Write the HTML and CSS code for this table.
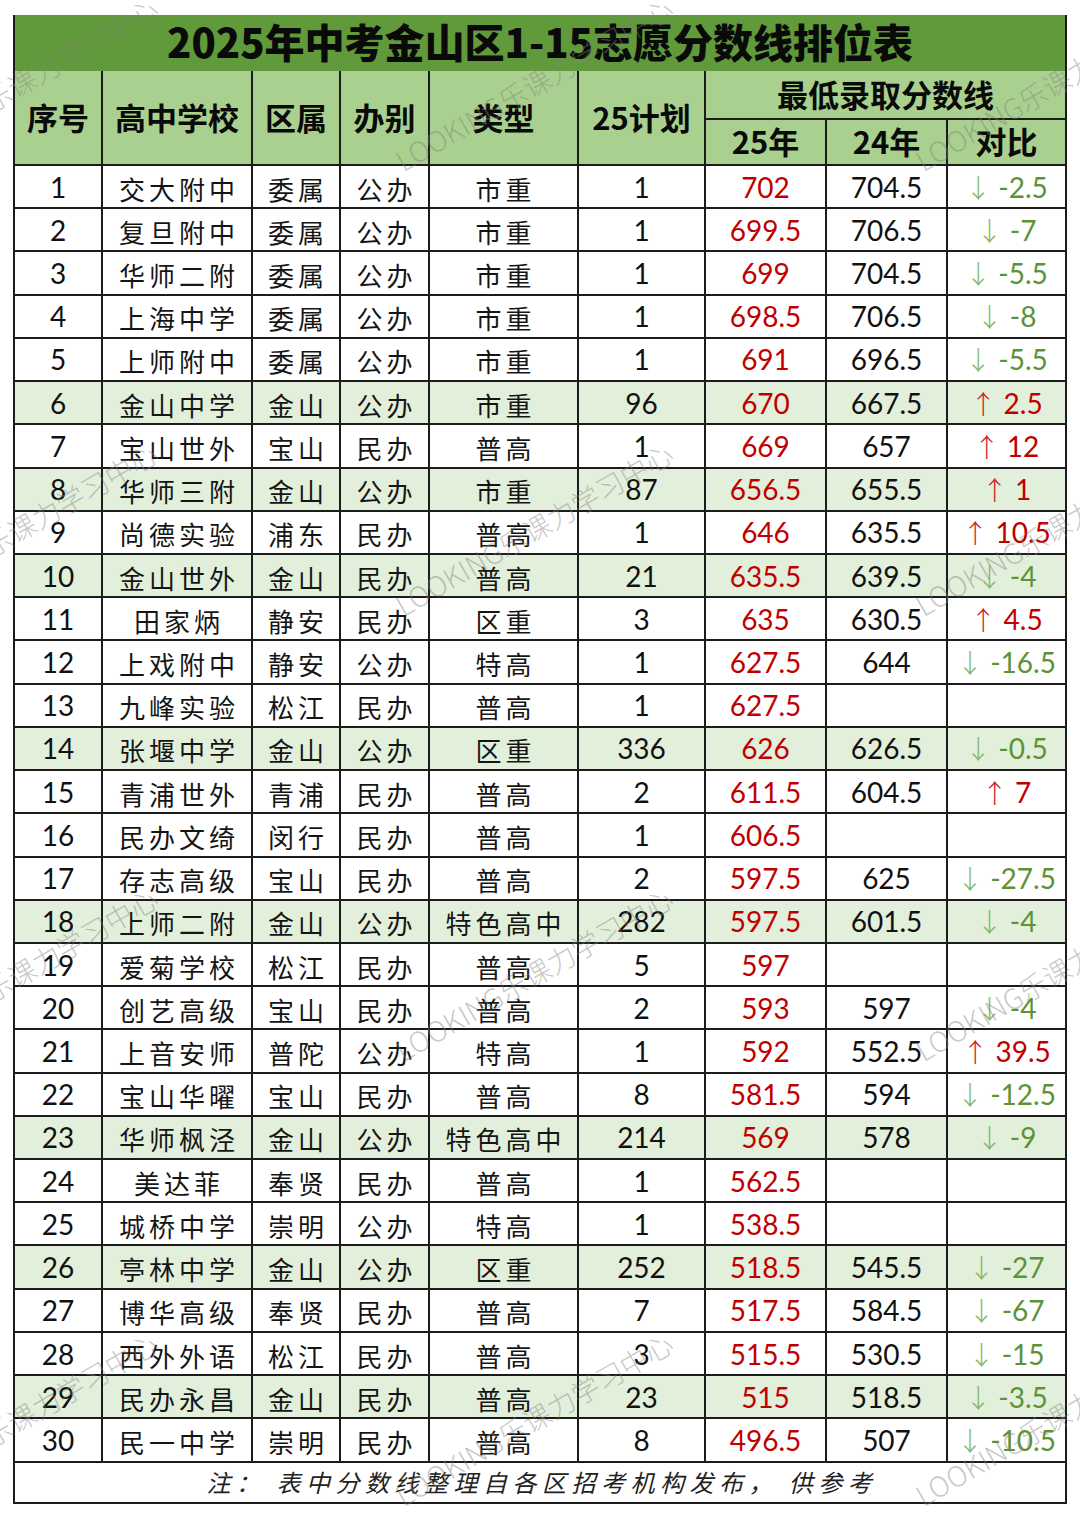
FILE: index.html
```
<!DOCTYPE html>
<html lang="zh-CN">
<head>
<meta charset="utf-8">
<title>2025年中考金山区1-15志愿分数线排位表</title>
<link rel="stylesheet" href="styles.css">
</head>
<body>
<div class="page">
<table class="sheet">
<colgroup>
<col class="w-seq"><col class="w-school"><col class="w-area"><col class="w-type1"><col class="w-type2"><col class="w-plan"><col class="w-s25"><col class="w-s24"><col class="w-diff">
</colgroup>
<thead>
<tr class="title"><th colspan="9">2025年中考金山区1-15志愿分数线排位表</th></tr>
<tr class="hd1">
<th rowspan="2">序号</th><th rowspan="2">高中学校</th><th rowspan="2">区属</th><th rowspan="2">办别</th><th rowspan="2">类型</th><th rowspan="2">25计划</th><th colspan="3">最低录取分数线</th>
</tr>
<tr class="hd2"><th>25年</th><th>24年</th><th>对比</th></tr>
</thead>
<tbody>
<tr><td class="num">1</td><td class="cn">交大附中</td><td class="cn">委属</td><td class="cn">公办</td><td class="cn">市重</td><td class="num">1</td><td class="num red">702</td><td class="num">704.5</td><td class="num down"><span class="ar">↓</span> -2.5</td></tr>
<tr><td class="num">2</td><td class="cn">复旦附中</td><td class="cn">委属</td><td class="cn">公办</td><td class="cn">市重</td><td class="num">1</td><td class="num red">699.5</td><td class="num">706.5</td><td class="num down"><span class="ar">↓</span> -7</td></tr>
<tr><td class="num">3</td><td class="cn">华师二附</td><td class="cn">委属</td><td class="cn">公办</td><td class="cn">市重</td><td class="num">1</td><td class="num red">699</td><td class="num">704.5</td><td class="num down"><span class="ar">↓</span> -5.5</td></tr>
<tr><td class="num">4</td><td class="cn">上海中学</td><td class="cn">委属</td><td class="cn">公办</td><td class="cn">市重</td><td class="num">1</td><td class="num red">698.5</td><td class="num">706.5</td><td class="num down"><span class="ar">↓</span> -8</td></tr>
<tr><td class="num">5</td><td class="cn">上师附中</td><td class="cn">委属</td><td class="cn">公办</td><td class="cn">市重</td><td class="num">1</td><td class="num red">691</td><td class="num">696.5</td><td class="num down"><span class="ar">↓</span> -5.5</td></tr>
<tr class="hl"><td class="num">6</td><td class="cn">金山中学</td><td class="cn">金山</td><td class="cn">公办</td><td class="cn">市重</td><td class="num">96</td><td class="num red">670</td><td class="num">667.5</td><td class="num up"><span class="ar">↑</span> 2.5</td></tr>
<tr><td class="num">7</td><td class="cn">宝山世外</td><td class="cn">宝山</td><td class="cn">民办</td><td class="cn">普高</td><td class="num">1</td><td class="num red">669</td><td class="num">657</td><td class="num up"><span class="ar">↑</span> 12</td></tr>
<tr class="hl"><td class="num">8</td><td class="cn">华师三附</td><td class="cn">金山</td><td class="cn">公办</td><td class="cn">市重</td><td class="num">87</td><td class="num red">656.5</td><td class="num">655.5</td><td class="num up"><span class="ar">↑</span> 1</td></tr>
<tr><td class="num">9</td><td class="cn">尚德实验</td><td class="cn">浦东</td><td class="cn">民办</td><td class="cn">普高</td><td class="num">1</td><td class="num red">646</td><td class="num">635.5</td><td class="num up"><span class="ar">↑</span> 10.5</td></tr>
<tr class="hl"><td class="num">10</td><td class="cn">金山世外</td><td class="cn">金山</td><td class="cn">民办</td><td class="cn">普高</td><td class="num">21</td><td class="num red">635.5</td><td class="num">639.5</td><td class="num down"><span class="ar">↓</span> -4</td></tr>
<tr><td class="num">11</td><td class="cn">田家炳</td><td class="cn">静安</td><td class="cn">民办</td><td class="cn">区重</td><td class="num">3</td><td class="num red">635</td><td class="num">630.5</td><td class="num up"><span class="ar">↑</span> 4.5</td></tr>
<tr><td class="num">12</td><td class="cn">上戏附中</td><td class="cn">静安</td><td class="cn">公办</td><td class="cn">特高</td><td class="num">1</td><td class="num red">627.5</td><td class="num">644</td><td class="num down"><span class="ar">↓</span> -16.5</td></tr>
<tr><td class="num">13</td><td class="cn">九峰实验</td><td class="cn">松江</td><td class="cn">民办</td><td class="cn">普高</td><td class="num">1</td><td class="num red">627.5</td><td class="num"></td><td class="num"></td></tr>
<tr class="hl"><td class="num">14</td><td class="cn">张堰中学</td><td class="cn">金山</td><td class="cn">公办</td><td class="cn">区重</td><td class="num">336</td><td class="num red">626</td><td class="num">626.5</td><td class="num down"><span class="ar">↓</span> -0.5</td></tr>
<tr><td class="num">15</td><td class="cn">青浦世外</td><td class="cn">青浦</td><td class="cn">民办</td><td class="cn">普高</td><td class="num">2</td><td class="num red">611.5</td><td class="num">604.5</td><td class="num up"><span class="ar">↑</span> 7</td></tr>
<tr><td class="num">16</td><td class="cn">民办文绮</td><td class="cn">闵行</td><td class="cn">民办</td><td class="cn">普高</td><td class="num">1</td><td class="num red">606.5</td><td class="num"></td><td class="num"></td></tr>
<tr><td class="num">17</td><td class="cn">存志高级</td><td class="cn">宝山</td><td class="cn">民办</td><td class="cn">普高</td><td class="num">2</td><td class="num red">597.5</td><td class="num">625</td><td class="num down"><span class="ar">↓</span> -27.5</td></tr>
<tr class="hl"><td class="num">18</td><td class="cn">上师二附</td><td class="cn">金山</td><td class="cn">公办</td><td class="cn">特色高中</td><td class="num">282</td><td class="num red">597.5</td><td class="num">601.5</td><td class="num down"><span class="ar">↓</span> -4</td></tr>
<tr><td class="num">19</td><td class="cn">爱菊学校</td><td class="cn">松江</td><td class="cn">民办</td><td class="cn">普高</td><td class="num">5</td><td class="num red">597</td><td class="num"></td><td class="num"></td></tr>
<tr><td class="num">20</td><td class="cn">创艺高级</td><td class="cn">宝山</td><td class="cn">民办</td><td class="cn">普高</td><td class="num">2</td><td class="num red">593</td><td class="num">597</td><td class="num down"><span class="ar">↓</span> -4</td></tr>
<tr><td class="num">21</td><td class="cn">上音安师</td><td class="cn">普陀</td><td class="cn">公办</td><td class="cn">特高</td><td class="num">1</td><td class="num red">592</td><td class="num">552.5</td><td class="num up"><span class="ar">↑</span> 39.5</td></tr>
<tr><td class="num">22</td><td class="cn">宝山华曜</td><td class="cn">宝山</td><td class="cn">民办</td><td class="cn">普高</td><td class="num">8</td><td class="num red">581.5</td><td class="num">594</td><td class="num down"><span class="ar">↓</span> -12.5</td></tr>
<tr class="hl"><td class="num">23</td><td class="cn">华师枫泾</td><td class="cn">金山</td><td class="cn">公办</td><td class="cn">特色高中</td><td class="num">214</td><td class="num red">569</td><td class="num">578</td><td class="num down"><span class="ar">↓</span> -9</td></tr>
<tr><td class="num">24</td><td class="cn">美达菲</td><td class="cn">奉贤</td><td class="cn">民办</td><td class="cn">普高</td><td class="num">1</td><td class="num red">562.5</td><td class="num"></td><td class="num"></td></tr>
<tr><td class="num">25</td><td class="cn">城桥中学</td><td class="cn">崇明</td><td class="cn">公办</td><td class="cn">特高</td><td class="num">1</td><td class="num red">538.5</td><td class="num"></td><td class="num"></td></tr>
<tr class="hl"><td class="num">26</td><td class="cn">亭林中学</td><td class="cn">金山</td><td class="cn">公办</td><td class="cn">区重</td><td class="num">252</td><td class="num red">518.5</td><td class="num">545.5</td><td class="num down"><span class="ar">↓</span> -27</td></tr>
<tr><td class="num">27</td><td class="cn">博华高级</td><td class="cn">奉贤</td><td class="cn">民办</td><td class="cn">普高</td><td class="num">7</td><td class="num red">517.5</td><td class="num">584.5</td><td class="num down"><span class="ar">↓</span> -67</td></tr>
<tr><td class="num">28</td><td class="cn">西外外语</td><td class="cn">松江</td><td class="cn">民办</td><td class="cn">普高</td><td class="num">3</td><td class="num red">515.5</td><td class="num">530.5</td><td class="num down"><span class="ar">↓</span> -15</td></tr>
<tr class="hl"><td class="num">29</td><td class="cn">民办永昌</td><td class="cn">金山</td><td class="cn">民办</td><td class="cn">普高</td><td class="num">23</td><td class="num red">515</td><td class="num">518.5</td><td class="num down"><span class="ar">↓</span> -3.5</td></tr>
<tr><td class="num">30</td><td class="cn">民一中学</td><td class="cn">崇明</td><td class="cn">民办</td><td class="cn">普高</td><td class="num">8</td><td class="num red">496.5</td><td class="num">507</td><td class="num down"><span class="ar">↓</span> -10.5</td></tr>
</tbody>
<tfoot>
<tr class="note"><td colspan="9">注： 表中分数线整理自各区招考机构发布， 供参考</td></tr>
</tfoot>
</table>

<div class="wm-layer" aria-hidden="true">
<div class="wm c0 r0">LOOKING乐课力学习中心</div>
<div class="wm c1 r0">LOOKING乐课力学习中心</div>
<div class="wm c2 r0">LOOKING乐课力学习中心</div>
<div class="wm c0 r1">LOOKING乐课力学习中心</div>
<div class="wm c1 r1">LOOKING乐课力学习中心</div>
<div class="wm c2 r1">LOOKING乐课力学习中心</div>
<div class="wm c0 r2">LOOKING乐课力学习中心</div>
<div class="wm c1 r2">LOOKING乐课力学习中心</div>
<div class="wm c2 r2">LOOKING乐课力学习中心</div>
<div class="wm c0 r3">LOOKING乐课力学习中心</div>
<div class="wm c1 r3">LOOKING乐课力学习中心</div>
<div class="wm c2 r3">LOOKING乐课力学习中心</div>
</div>
</div>
</body>
</html>
```
FILE: styles.css
```
html, body {
  margin: 0;
  padding: 0;
  background: #ffffff;
}
.page {
  position: relative;
  width: 1080px;
  height: 1517px;
  overflow: hidden;
  padding: 15px 0 0 13px;
  box-sizing: border-box;
}
.sheet {
  border-collapse: collapse;
  table-layout: fixed;
  width: 1054px;
  font-family: "Noto Sans CJK SC", sans-serif;
  color: #111;
}
.w-seq { width: 88px; }
.w-school { width: 150px; }
.w-area { width: 88px; }
.w-type1 { width: 89px; }
.w-type2 { width: 149px; }
.w-plan { width: 127px; }
.w-s25 { width: 121px; }
.w-s24 { width: 121px; }
.w-diff { width: 119px; }

.sheet th, .sheet td {
  border: 2px solid #1c1c1c;
  padding: 0;
  text-align: center;
  vertical-align: middle;
  white-space: nowrap;
}
.title th {
  height: 56px;
  background: #619a3a;
  font-size: 40px;
  font-weight: 900;
  line-height: 1;
  border-top: none;
  border-bottom: none;
  color: #0a0a0a;
  padding-bottom: 5px;
  box-sizing: border-box;
}
.hd1 th, .hd2 th {
  background: #a9d08e;
  font-size: 31px;
  font-weight: 700;
  line-height: 1;
  color: #0a0a0a;
}
.hd1 th { border-top: none; padding-bottom: 3px; }
.hd1 { height: 48px; }
.hd2 { height: 46px; }
.hd2 th { padding-bottom: 4px; }

tbody tr { height: 43.23px; }
tbody tr.hl td { background: #e2efda; }
td.cn {
  font-size: 26px;
  letter-spacing: 4px;
  padding-left: 4px;
  padding-top: 4px;
  line-height: 1;
  color: #151515;
}
td.num {
  font-family: "Lato", "Noto Sans", sans-serif;
  font-size: 28px;
  line-height: 1;
  color: #111;
}
td.red { color: #c00000; }
td.up { color: #c00000; }
td.down { color: #5b9336; }
.ar {
  font-family: "Noto Sans CJK SC", sans-serif;
  font-size: 26px;
  font-weight: 300;
}
td.down .ar { color: #86b865; }
td.up .ar { color: #c8242a; }

.note td {
  height: 39px;
  font-size: 24px;
  font-style: italic;
  letter-spacing: 5.5px;
  line-height: 1;
  color: #222;
  padding-left: 4px;
}

.wm-layer {
  position: absolute;
  left: 0;
  top: 0;
  width: 1080px;
  height: 1517px;
  pointer-events: none;
}
.wm {
  position: absolute;
  height: 30px;
  line-height: 30px;
  font-family: "Noto Sans CJK SC", sans-serif;
  font-weight: 300;
  font-size: 28px;
  color: rgba(130, 130, 130, 0.45);
  white-space: nowrap;
  transform-origin: 0 100%;
  transform: rotate(-30deg);
}
.c0 { left: -110px; }
.c1 { left: 405px; }
.c2 { left: 925px; }
.r0 { top: 145px; }
.r1 { top: 590px; }
.r2 { top: 1035px; }
.r3 { top: 1480px; }
```
